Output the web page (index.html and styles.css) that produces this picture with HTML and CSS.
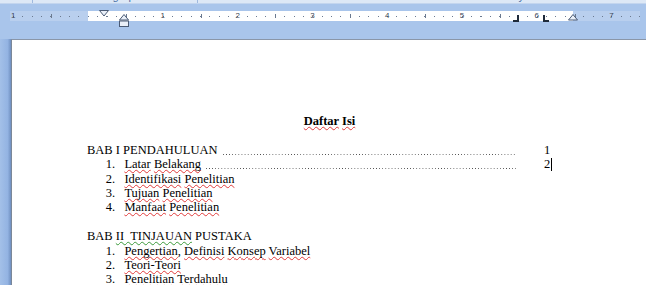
FILE: index.html
```html
<!DOCTYPE html>
<html lang="id">
<head>
    <meta charset="UTF-8">
    <title>Daftar Isi</title>
    <link rel="stylesheet" href="styles.css">
</head>
<body>
<div class="window">
    <div class="ribbon-edge">
        <div class="group group-clip"></div>
        <div class="group group-paragraph"><span>Paragraph</span></div>
        <div class="group group-styles"><span>Styles</span></div>
    </div>

    <div class="ruler-bar">
        <div class="ruler">
            <div class="ruler-numbers">
                <span>1</span><span></span><span>1</span><span>2</span><span>3</span><span>4</span><span>5</span><span>6</span><span>7</span>
            </div>
            <!-- indent + tab markers sit on top of the ruler -->
            <svg class="marker first-line" width="10" height="7" viewBox="0 0 10 7">
                <polygon points="0.5,0.5 9.5,0.5 5,6" fill="#e9eff8" stroke="#4a5a74"/>
            </svg>
            <svg class="marker hanging" width="10" height="13" viewBox="0 0 10 13">
                <polygon points="5,0.5 9.5,6 0.5,6" fill="#e9eff8" stroke="#4a5a74"/>
                <rect x="0.5" y="7" width="9" height="5.5" fill="#e9eff8" stroke="#4a5a74"/>
            </svg>
            <svg class="marker right-indent" width="10" height="7" viewBox="0 0 10 7">
                <polygon points="5,0.5 9.5,6 0.5,6" fill="#e9eff8" stroke="#4a5a74"/>
            </svg>
            <svg class="marker tab-right" width="6" height="7" viewBox="0 0 6 7">
                <path d="M5 0 V6 H0" fill="none" stroke="#1f2a3a" stroke-width="2"/>
            </svg>
            <svg class="marker tab-left" width="6" height="7" viewBox="0 0 6 7">
                <path d="M1 0 V6 H6" fill="none" stroke="#1f2a3a" stroke-width="2"/>
            </svg>
        </div>
    </div>

    <div class="workspace">
        <div class="gutter"></div>
        <div class="page">
            <h1 class="toc-title"><span class="typo">Daftar</span> <span class="typo">Isi</span></h1>

            <div class="toc-section">
                <div class="toc-row">
                    <span class="label">BAB I PENDAHULUAN</span>
                    <span class="leader"></span>
                    <span class="pageno">1</span>
                </div>
                <div class="toc-row item">
                    <span class="num">1.</span>
                    <span class="label"><span class="typo">Latar</span> <span class="typo">Belakang</span></span>
                    <span class="leader"></span>
                    <span class="pageno">2<span class="caret"></span></span>
                </div>
                <div class="toc-row item">
                    <span class="num">2.</span>
                    <span class="label"><span class="typo">Identifikasi</span> <span class="typo">Penelitian</span></span>
                </div>
                <div class="toc-row item">
                    <span class="num">3.</span>
                    <span class="label"><span class="typo">Tujuan</span> <span class="typo">Penelitian</span></span>
                </div>
                <div class="toc-row item">
                    <span class="num">4.</span>
                    <span class="label"><span class="typo">Manfaat</span> <span class="typo">Penelitian</span></span>
                </div>
            </div>

            <div class="toc-section">
                <div class="toc-row">
                    <span class="label">BAB <span class="grammar">II&nbsp; TINJAUAN</span> PUSTAKA</span>
                </div>
                <div class="toc-row item">
                    <span class="num">1.</span>
                    <span class="label"><span class="typo">Pengertian</span>, <span class="typo">Definisi</span> <span class="typo">Konsep</span> <span class="typo">Variabel</span></span>
                </div>
                <div class="toc-row item">
                    <span class="num">2.</span>
                    <span class="label"><span class="typo">Teori-Teori</span></span>
                </div>
                <div class="toc-row item">
                    <span class="num">3.</span>
                    <span class="label"><span class="typo">Penelitian</span> <span class="typo">Terdahulu</span></span>
                </div>
            </div>
        </div>
    </div>
</div>
</body>
</html>
```

FILE: styles.css
```css
body {
    margin: 0;
    padding: 0;
    width: 646px;
    height: 285px;
    overflow: hidden;
    background: #a6c3ea;
    font-family: 'Liberation Sans', Arial, sans-serif;
}
.window {
    display: flex;
    flex-direction: column;
    height: 285px;
}

/* bottom edge of the ribbon, labels mostly clipped */
.ribbon-edge {
    display: flex;
    flex-shrink: 0;
    height: 3px;
    overflow: hidden;
    background: #dde8f6;
    border-bottom: 1px solid #c3d5ee;
}
.group {
    flex-shrink: 0;
    height: 3px;
    border-right: 1px solid #9fb9de;
    text-align: center;
    font-size: 11px;
    line-height: 11px;
    color: #4a6fa5;
}
.group span {
    display: block;
    margin-top: -9px;
}
.group-clip {
    width: 32px;
}
.group-paragraph {
    width: 164px;
}
.group-styles {
    width: 650px;
    border-right: none;
}

/* ruler */
.ruler-bar {
    flex-shrink: 0;
    height: 35px;
    background: #a9c5eb;
}
.ruler {
    position: relative;
    margin: 7px 0 0 10px;
    width: 630px;
    height: 10px;
    background:
        repeating-linear-gradient(to right, #6b7a90 0 1px, transparent 1px 74.8px) 40.6px 3px / 100% 4px no-repeat,
        repeating-linear-gradient(to right, #6b7a90 0 1px, transparent 1px 9.35px) 3.2px 5px / 100% 1px no-repeat,
        linear-gradient(to right, #b9cfee 0 78px, #fff 78px 563px, #b9cfee 563px);
}
.ruler-numbers {
    display: flex;
    margin-left: -34.2px;
    height: 10px;
    overflow: hidden;
}
.ruler-numbers span {
    flex: 0 0 74.8px;
    text-align: center;
    font-size: 8px;
    line-height: 10px;
    color: #3c4656;
}
.marker {
    position: absolute;
    display: block;
}
.first-line {
    left: 89px;
    top: -1px;
}
.hanging {
    left: 109px;
    top: 3px;
}
.right-indent {
    left: 558px;
    top: 3px;
}
.tab-right {
    left: 503px;
    top: 4px;
}
.tab-left {
    left: 533px;
    top: 4px;
}

/* document area */
.workspace {
    display: flex;
    flex: 1;
    min-height: 0;
}
.gutter {
    width: 11px;
    background: linear-gradient(to right, #a3c0e8, #93b3e2 70%, #6f8fc0);
}
.page {
    flex: 1;
    background: #fff;
    border-top: 1px solid #8a96a8;
    border-left: 1px solid #7b8798;
    padding: 74px 0 0 75px;
    overflow: hidden;
    font-family: 'Liberation Serif', 'Times New Roman', serif;
    font-size: 12.5px;
    line-height: 14.4px;
    color: #000;
}
.toc-title {
    width: 485px;
    margin: 0 0 14.4px;
    text-align: center;
    font-size: 12.5px;
    line-height: 14.4px;
    font-weight: bold;
}
.toc-section {
    width: 485px;
    margin-bottom: 14.4px;
}
.toc-row {
    display: flex;
    height: 14.4px;
    white-space: nowrap;
}
.toc-row.item {
    padding-left: 18.7px;
}
.num {
    flex: 0 0 18.7px;
}
.leader {
    flex: 1;
    margin-left: 5px;
    background: linear-gradient(to right, #4a4a4a 1px, transparent 1px) 0 11px / 3.1px 1px repeat-x;
}
.pageno {
    flex: 0 0 56px;
    box-sizing: border-box;
    padding-left: 28px;
}
.caret {
    display: inline-block;
    width: 1px;
    height: 13px;
    background: #000;
    vertical-align: -3px;
    margin-left: 1px;
}
.typo {
    text-decoration: underline wavy #e03a3a;
    text-decoration-thickness: 1px;
    text-underline-offset: 1px;
    text-decoration-skip-ink: none;
}
.grammar {
    text-decoration: underline wavy #3a9a3a;
    text-decoration-thickness: 1px;
    text-underline-offset: 1px;
    text-decoration-skip-ink: none;
}
```
